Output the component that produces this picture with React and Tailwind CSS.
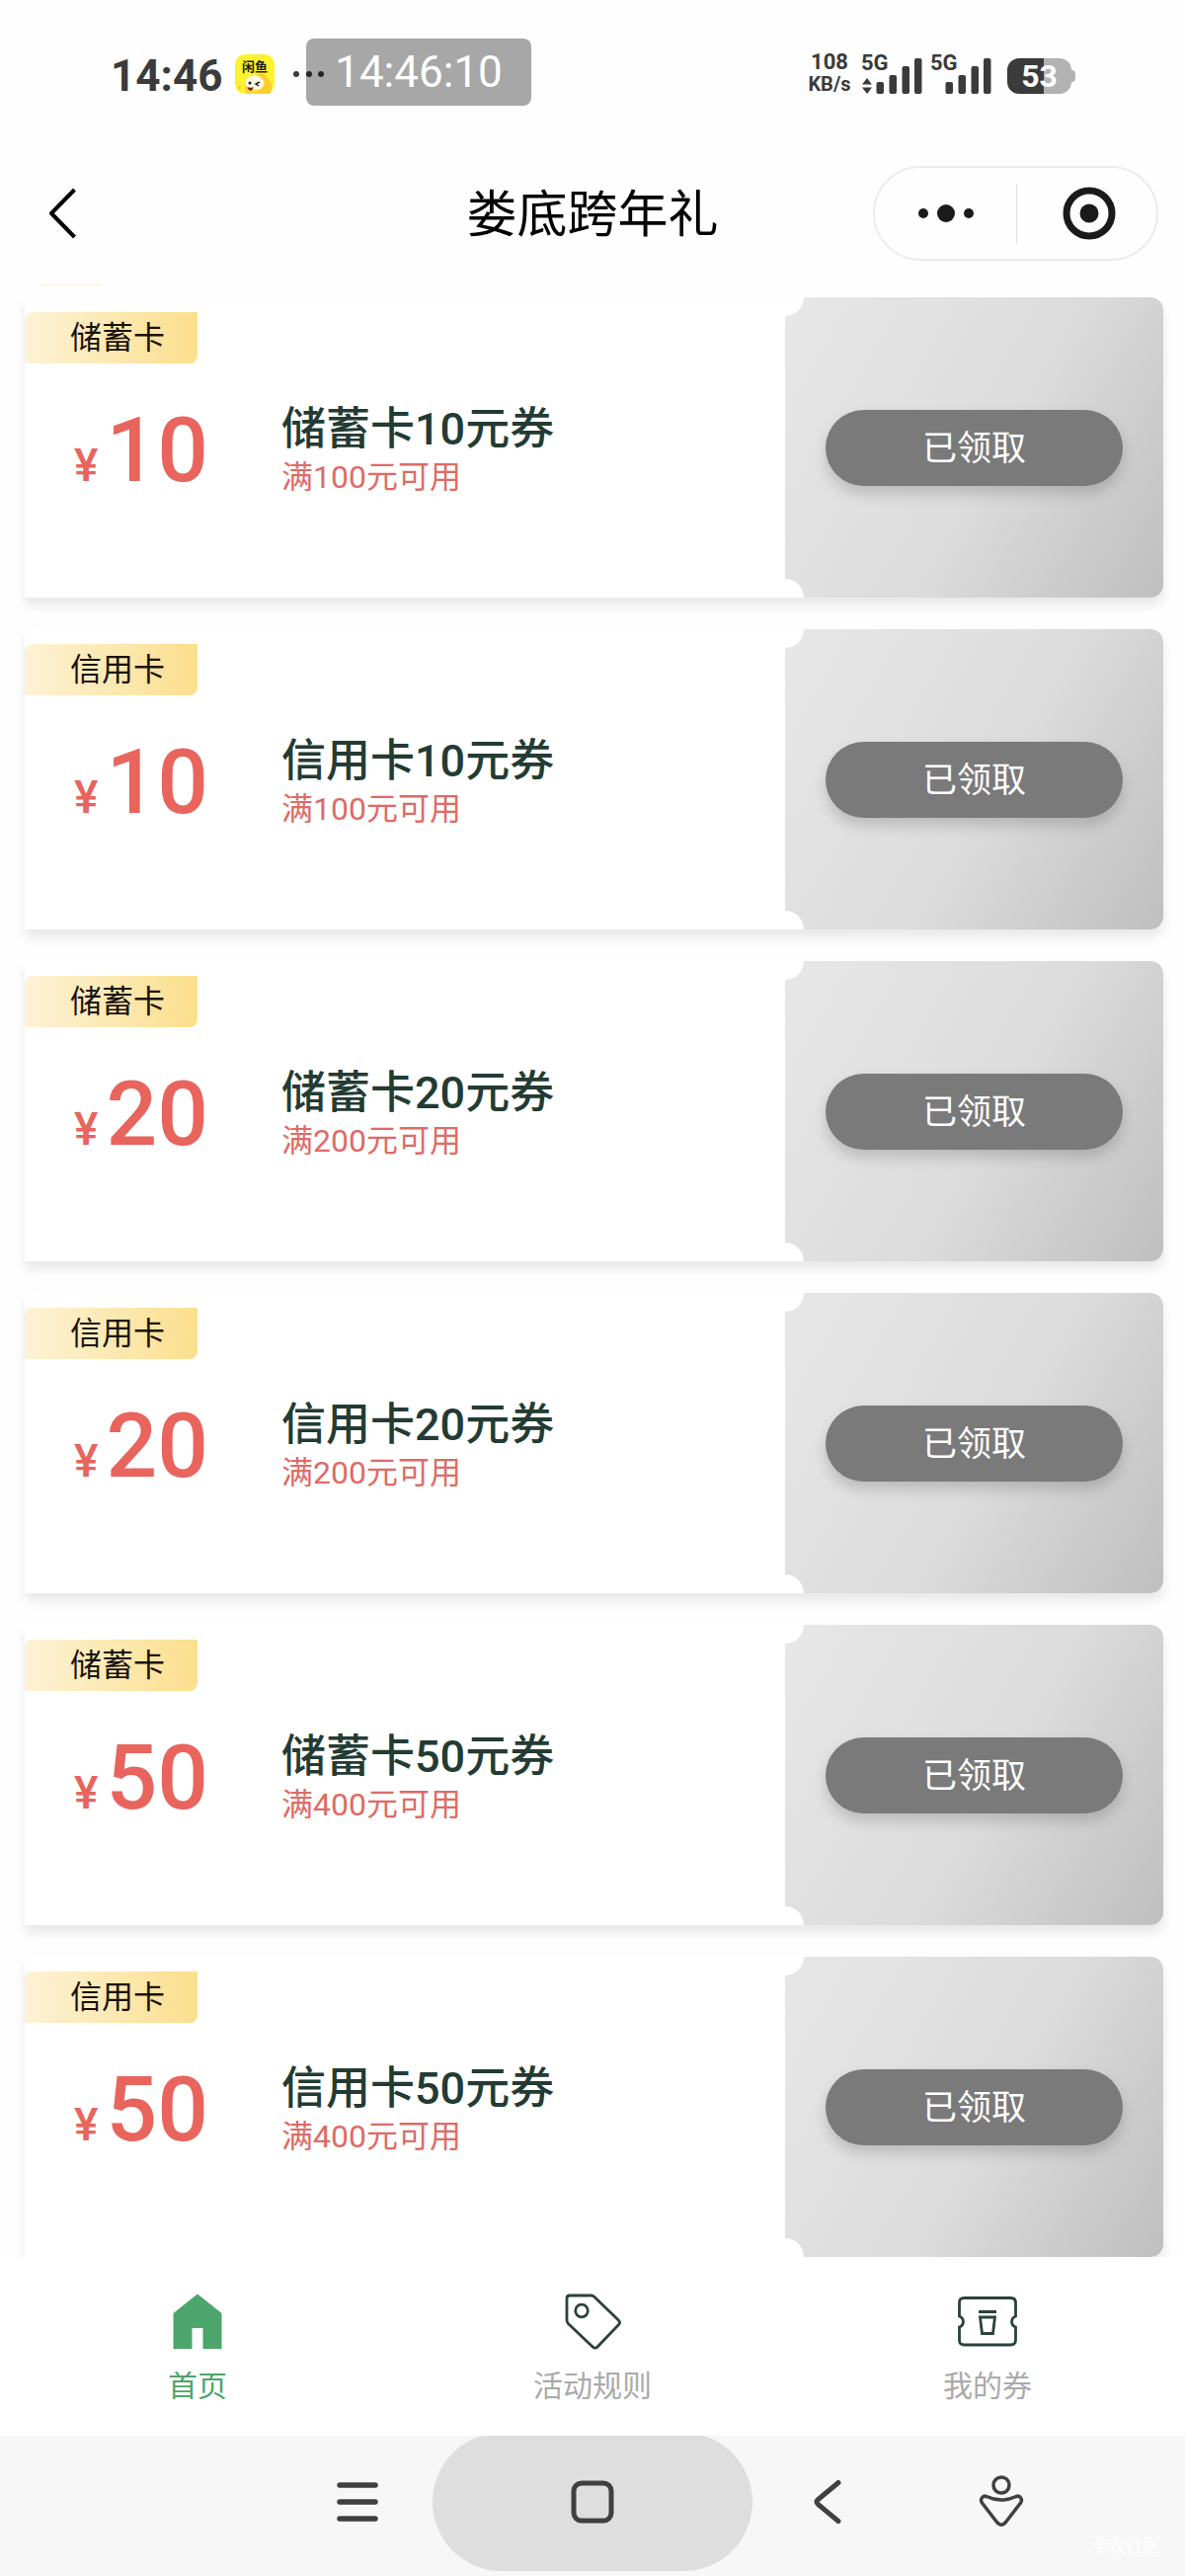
const coupons = [
  { kind: "储蓄卡", amount: 10, min: 100 },
  { kind: "信用卡", amount: 10, min: 100 },
  { kind: "储蓄卡", amount: 20, min: 200 },
  { kind: "信用卡", amount: 20, min: 200 },
  { kind: "储蓄卡", amount: 50, min: 400 },
  { kind: "信用卡", amount: 50, min: 400 },
];

function AppBadge() {
  return (
    <svg className="h-10 w-10" viewBox="0 0 40 40" aria-hidden="true">
      <rect width="40" height="40" rx="10" fill="#fdf22f" />
      <path d="M6 32c-4-1-4 3-1 4M12 40c-4-8-1-17 9-18 5-4 11-2 12 3 5 3 6 9 2 15z" fill="#fbcf2c" />
      <ellipse cx="20" cy="29" rx="9.5" ry="7.5" fill="#fff8e4" />
      <path d="M13 34c3 3 8 3 11 1l-2 5h-8z" fill="#fbd63a" />
      <path d="M12.500 33c2 1 4 1 6 0 0 5-5 5-6 0z" fill="#8a2216" />
      <circle cx="15" cy="29" r="1.600" fill="#222" />
      <path d="M25 28l-4 2 3 2" fill="none" stroke="#222" strokeWidth="1.500" />
      <text x="20" y="16.500" textAnchor="middle" fontSize="13" fontWeight="700" fill="#24230c">闲鱼</text>
    </svg>
  );
}

function Signal({ traffic }) {
  return (
    <div className="relative flex h-10 w-[62px] items-end justify-end">
      <span className="absolute -top-[2px] left-0 text-[22px] leading-[22px] font-bold">5G</span>
      {traffic && (
        <svg className="mr-1 h-4 w-[10px]" viewBox="0 0 10 16" fill="currentColor" aria-hidden="true">
          <path d="M5 0l5 6.500H0zM5 16l5-6.500H0z" />
        </svg>
      )}
      <svg className="h-9 w-[47px]" viewBox="0 0 47 36" fill="currentColor" aria-hidden="true">
        <rect x="0.500" y="24" width="7.500" height="12" rx="2" />
        <rect x="13.500" y="17" width="7.500" height="19" rx="2" />
        <rect x="26.500" y="8" width="7.500" height="28" rx="2" />
        <rect x="39" y="0" width="7.500" height="36" rx="2" />
      </svg>
    </div>
  );
}

function StatusBar() {
  return (
    <div className="relative flex h-36 items-center justify-between pt-[6px] pr-[111px] pl-[112px] text-[#3b3b3b]">
      <div className="flex items-center">
        <span className="w-[126px] pt-1 text-[44px] leading-[44px] font-bold">14:46</span>
        <AppBadge />
        <svg className="ml-[18px] h-2 w-8" viewBox="0 0 32 8" fill="currentColor" aria-hidden="true">
          <circle cx="4" cy="4" r="3" />
          <circle cx="17" cy="4" r="3" />
          <circle cx="29" cy="4" r="3" />
        </svg>
      </div>
      <div className="flex h-10 items-end">
        <div className="mr-2 flex w-12 flex-col items-center font-bold">
          <span className="text-[22px] leading-6">108</span>
          <span className="text-[20px] leading-5">KB/s</span>
        </div>
        <Signal traffic />
        <div className="w-2" />
        <Signal />
        <div className="ml-4 flex items-center">
          <div className="flex h-9 w-[65px] items-center justify-center rounded-xl bg-linear-to-r from-[#3b3b3b] from-57% to-[#b2b2b2] to-57% text-[32px] leading-8 font-bold text-white">
            53
          </div>
          <div className="h-3 w-1 rounded-r bg-[#b2b2b2]" />
        </div>
      </div>
      <div className="absolute top-[39px] left-[310px] flex h-[68px] w-[228px] items-center justify-center rounded-lg bg-black/34 text-[44px] leading-[44px] text-white">
        14:46:10
      </div>
    </div>
  );
}

function NavBar() {
  return (
    <header className="grid h-36 grid-cols-[1fr_auto_1fr] items-center px-[27px] text-black">
      <button type="button" aria-label="返回" className="ml-5 w-fit">
        <svg className="h-[52px] w-8" viewBox="0 0 32 52" fill="none" stroke="currentColor" strokeWidth="4" aria-hidden="true">
          <path d="M28.500 2L5 26l23.500 24" strokeLinejoin="round" />
        </svg>
      </button>
      <h1 className="pt-1 text-[51px] leading-[60px]">娄底跨年礼</h1>
      <div className="flex h-24 w-[289px] items-center justify-self-end rounded-full border-2 border-[#ececec] text-[#1a1a1a]">
        <button type="button" aria-label="更多" className="flex w-[143px] justify-center">
          <svg className="h-5 w-14" viewBox="0 0 56 20" fill="currentColor" aria-hidden="true">
            <circle cx="5" cy="10" r="5" />
            <circle cx="28" cy="10" r="9" />
            <circle cx="51" cy="10" r="5" />
          </svg>
        </button>
        <div className="h-[60px] w-px bg-[#e0e0e0]" />
        <button type="button" aria-label="关闭" className="flex flex-1 justify-center pl-1">
          <svg className="h-[54px] w-[54px]" viewBox="0 0 54 54" aria-hidden="true">
            <circle cx="27" cy="27" r="23" fill="none" stroke="currentColor" strokeWidth="7" />
            <circle cx="27" cy="27" r="9.500" fill="currentColor" />
          </svg>
        </button>
      </div>
    </header>
  );
}

function Coupon({ kind, amount, min }) {
  return (
    <li className="flex h-[304px] rounded-r-xl bg-white shadow-[0_8px_12px_rgba(0,0,0,0.09)]">
      <div className="flex flex-1 flex-col items-start pt-[15px]">
        <span className="h-[52px] w-[175px] rounded-tl-lg rounded-br-lg bg-linear-to-r from-[#fdf2d6] to-[#fbdf8c] pl-[46px] text-[32px] leading-[52px] text-[#1a1208]">
          {kind}
        </span>
        <div className="mt-8 flex items-start">
          <div className="flex w-[236px] items-baseline justify-center gap-2 font-medium text-[#e8645c]">
            <span className="text-[46px]">¥</span>
            <span className="text-[91px] leading-[112px]">{amount}</span>
          </div>
          <div className="pt-2 pl-6">
            <h2 className="text-[45px] leading-[54px] font-medium text-[#233b33]">
              {kind}{amount}元券
            </h2>
            <p className="text-[32px] leading-[42px] text-[#de6b66]">满{min}元可用</p>
          </div>
        </div>
      </div>
      <div className="relative flex w-[383px] shrink-0 items-center justify-center overflow-hidden rounded-r-[13px] bg-linear-120 from-[#e7e7e7] via-[#dcdcdc] via-54% to-[#bfbfbf]">
        <span className="absolute top-0 left-0 h-[19px] w-[19px] rounded-br-full bg-white" />
        <span className="absolute bottom-0 left-0 h-[19px] w-[19px] rounded-tr-full bg-white" />
        <button
          type="button"
          className="h-[77px] w-[301px] rounded-full bg-[#7a7a7a] pt-[3px] text-[35px] leading-[40px] text-white shadow-[0_8px_14px_rgba(0,0,0,0.16)]"
        >
          已领取
        </button>
      </div>
    </li>
  );
}

function HomeIcon() {
  return (
    <svg className="h-[60px] w-[60px]" viewBox="0 0 60 60" fill="#4ca56a" aria-hidden="true">
      <path d="M30 2.500L54.500 22v36H35.500V37h-11v21H5.500V22z" />
    </svg>
  );
}

function TagIcon() {
  return (
    <svg className="h-[60px] w-[60px]" viewBox="0 0 60 60" fill="none" stroke="#2b423c" strokeWidth="2.800" aria-hidden="true">
      <path d="M7 4h21.500c1.500 0 2.500.4 3.500 1.400L56.300 29c1.600 1.600 1.600 3.200 0 4.800L35 56c-1.600 1.600-3.200 1.600-4.800 0L5.400 32.500C4.400 31.500 4 30.500 4 29V7c0-2 1-3 3-3z" />
      <circle cx="19" cy="19.500" r="6.300" />
    </svg>
  );
}

function TicketIcon() {
  return (
    <svg className="h-[60px] w-[62px]" viewBox="0 0 62 60" fill="none" stroke="#2b423c" strokeWidth="2.800" aria-hidden="true">
      <path d="M7.500 6.500h47c3.500 0 5 1.500 5 5V25a6.500 6 0 0 0 0 11v13c0 3.500-1.500 5-5 5h-47c-3.500 0-5-1.500-5-5V36a6.500 6 0 0 0 0-11V11.500c0-3.500 1.500-5 5-5z" />
      <path d="M22 20.500h18M23.500 26h15l-2 16.500h-11z" />
    </svg>
  );
}

const tabs = [
  { label: "首页", Icon: HomeIcon, active: true },
  { label: "活动规则", Icon: TagIcon },
  { label: "我的券", Icon: TicketIcon },
];

function TabBar() {
  return (
    <nav className="grid h-[181px] grid-cols-3 bg-white pt-[35px]">
      {tabs.map(({ label, Icon, active }) => (
        <a key={label} href="#" aria-current={active ? "page" : undefined} className="flex flex-col items-center">
          <Icon />
          <span className={active ? "mt-4 text-[30px] leading-10 text-[#4ca56a]" : "mt-4 text-[30px] leading-10 text-[#aaaaaa]"}>
            {label}
          </span>
        </a>
      ))}
    </nav>
  );
}

function SystemBar() {
  return (
    <footer className="relative grid h-[142px] grid-cols-[1fr_auto_1fr] items-center overflow-hidden bg-[#f7f7f7] pb-2 text-[#404040]">
      <div className="flex justify-end pr-[54px]">
        <button type="button" aria-label="最近任务">
          <svg className="h-12 w-[44px]" viewBox="0 0 44 48" fill="none" stroke="currentColor" strokeWidth="5.500" strokeLinecap="round" aria-hidden="true">
            <path d="M4 7h36M4 24h36M4 41h36" />
          </svg>
        </button>
      </div>
      <button type="button" aria-label="主屏幕" className="-my-4 flex h-[140px] w-[324px] items-center justify-center rounded-full bg-[#dedede]">
        <svg className="h-11 w-11" viewBox="0 0 44 44" fill="none" stroke="currentColor" strokeWidth="5" aria-hidden="true">
          <rect x="3" y="3" width="38" height="38" rx="8" />
        </svg>
      </button>
      <div className="flex items-center pl-[60px]">
        <button type="button" aria-label="返回上一级">
          <svg className="h-12 w-8" viewBox="0 0 32 48" fill="none" stroke="currentColor" strokeWidth="5" strokeLinecap="round" strokeLinejoin="round" aria-hidden="true">
            <path d="M27 4.500L6.500 21.500q-3 2.500 0 5L27 43.500" />
          </svg>
        </button>
        <button type="button" aria-label="无障碍" className="ml-[135px]">
          <svg className="h-[58px] w-[50px]" viewBox="0 0 50 58" fill="none" stroke="currentColor" strokeWidth="3.500" aria-hidden="true">
            <circle cx="25" cy="12" r="8" />
            <path d="M10 23.500q15 7 30 0c4-1.500 7 3 4.500 6.500L29.500 49.500c-3 3.500-6 3.500-9 0L5.500 30c-2.500-3.500.5-8 4.500-6.500z" strokeLinejoin="round" />
          </svg>
        </button>
      </div>
      <span className="absolute right-6 bottom-5 text-[18px] leading-5 text-white">卡农社区</span>
    </footer>
  );
}

export default function App() {
  return (
    <div className="flex min-h-screen flex-col bg-[#fefefe] font-['Roboto','Noto_Sans_CJK_SC',sans-serif]">
      <StatusBar />
      <NavBar />
      <main className="flex-1 overflow-hidden pr-[22px] pl-[25px]">
        <div className="ml-4 h-px w-[62px] bg-[#fbf1d0]" />
        <ul className="mt-3 flex flex-col gap-8">
          {coupons.map((c) => (
            <Coupon key={c.kind + c.amount} {...c} />
          ))}
        </ul>
      </main>
      <TabBar />
      <SystemBar />
    </div>
  );
}
